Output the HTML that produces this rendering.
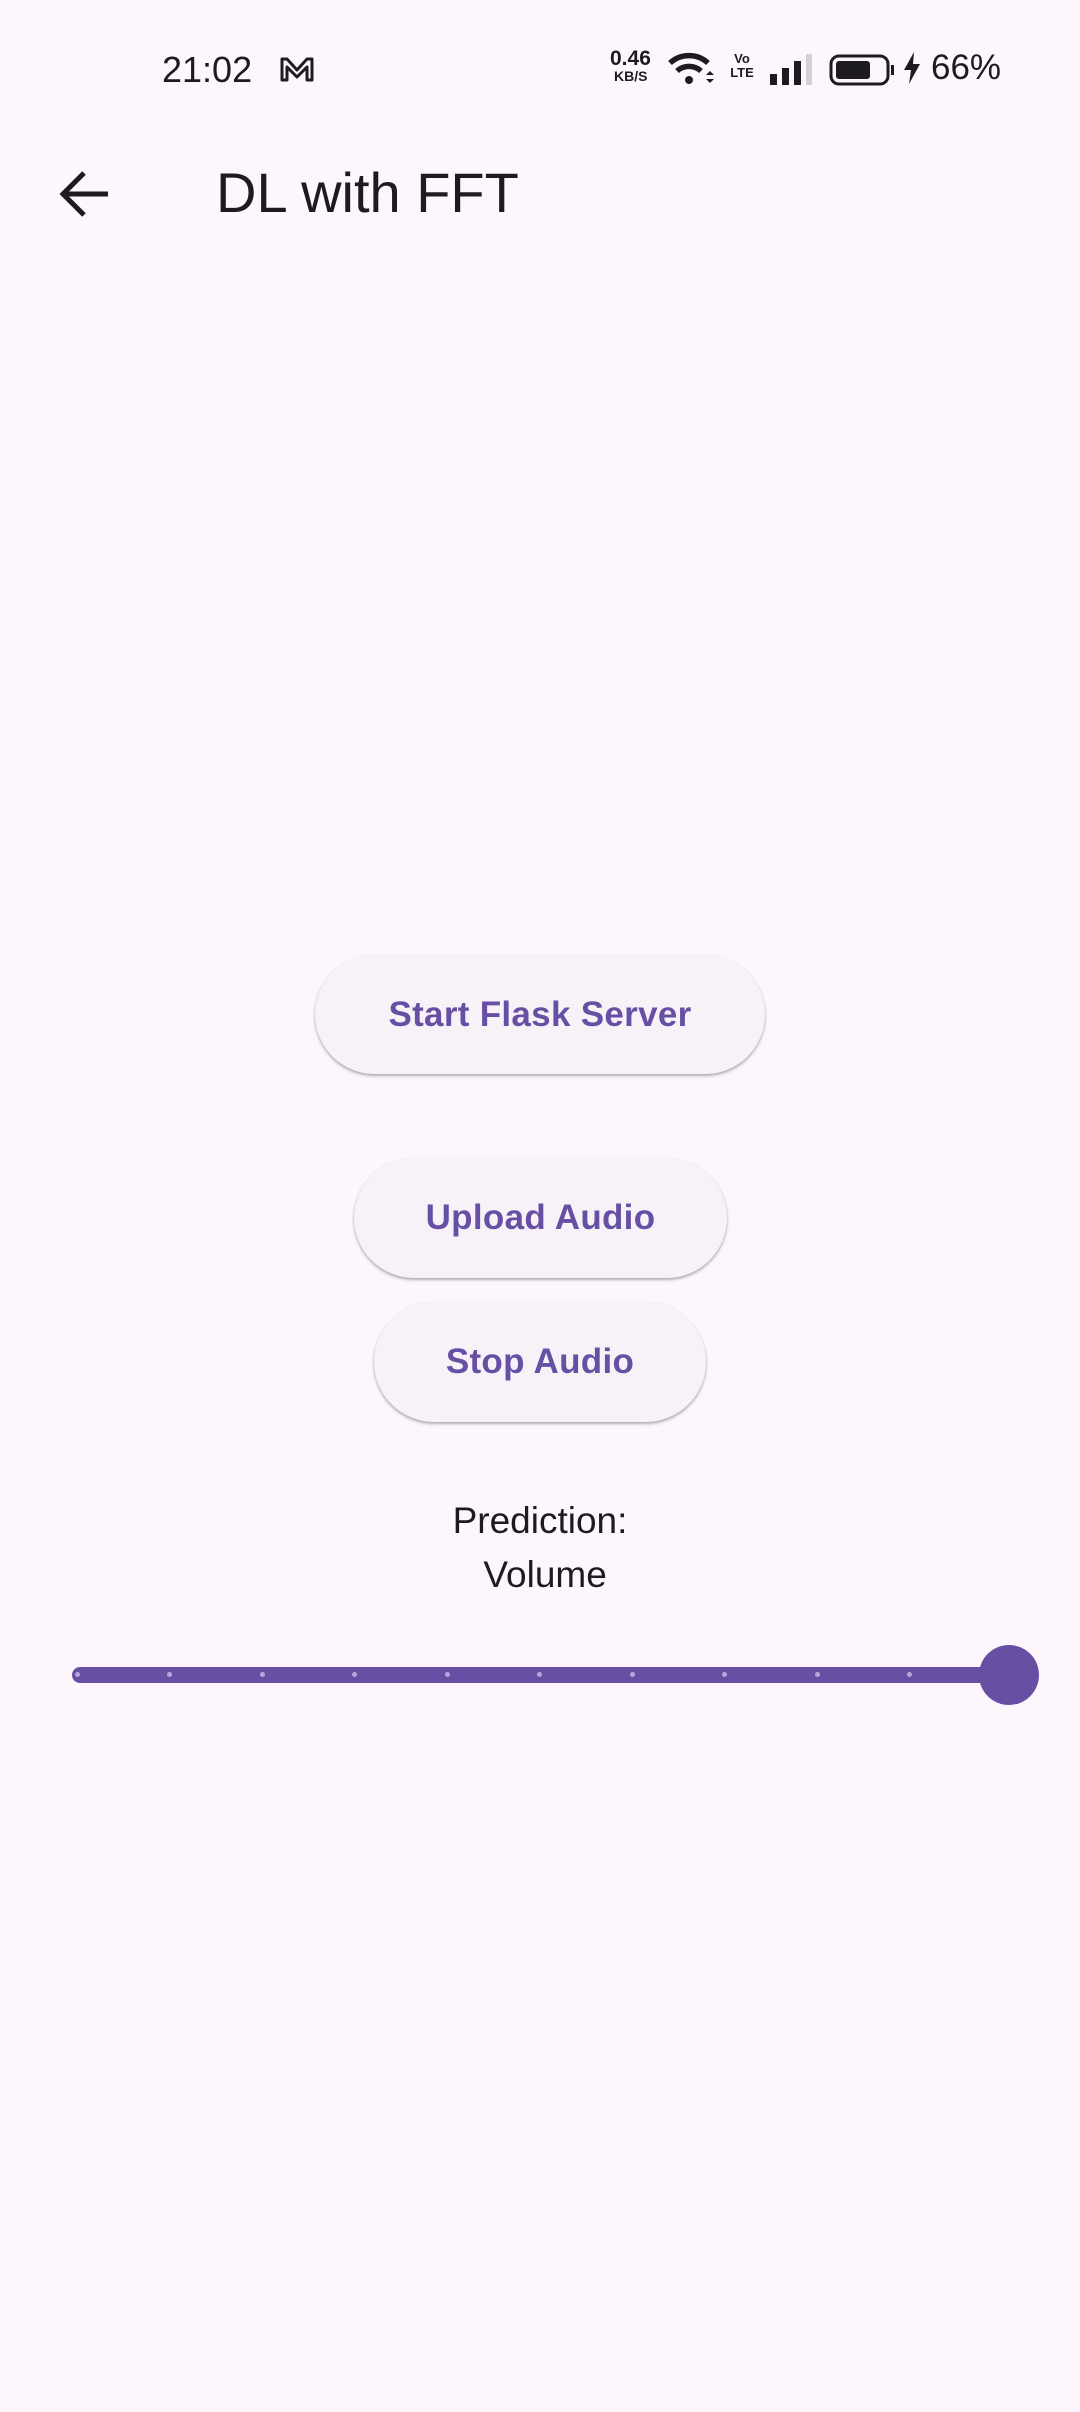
<!DOCTYPE html>
<html><head><meta charset="utf-8"><style>
html,body{margin:0;padding:0}
body{width:1080px;height:2412px;background:#fdf7fd;position:relative;overflow:hidden;font-family:"Liberation Sans",sans-serif;color:#1d1b20}
.abs{position:absolute}
.btn{position:absolute;background:#f6f2f8;border-radius:60px;box-shadow:0 2px 3px rgba(0,0,0,0.25),0 1px 2px rgba(0,0,0,0.12);color:#6750a4;font-weight:bold;font-size:35px;display:flex;align-items:center;justify-content:center;letter-spacing:0.3px}
.dot{position:absolute;top:1672px;width:5px;height:5px;border-radius:50%;background:#b7a6de}
</style></head><body>
<div class="abs" style="left:162px;top:50px;font-size:36px;line-height:40px">21:02</div>
<svg class="abs" style="left:279px;top:56px" width="36" height="26" viewBox="0 0 36 26"><path d="M3 24V3h5l10 11L28 3h5v21h-5V11l-10 10L8 11v13z" fill="none" stroke="#1d1b20" stroke-width="3" stroke-linejoin="round"/></svg>
<div class="abs" style="left:610px;top:49px;font-size:21px;font-weight:bold;line-height:20px">0.46</div>
<div class="abs" style="left:614px;top:68px;font-size:14px;font-weight:bold;line-height:16px">KB/S</div>
<svg class="abs" style="left:668px;top:50px" width="48" height="36" viewBox="0 0 48 36"><path d="M2 13a28 28 0 0 1 38 0" stroke="#1d1b20" stroke-width="5.5" fill="none"/><path d="M9 21a18 18 0 0 1 24 0" stroke="#1d1b20" stroke-width="5.5" fill="none"/><circle cx="21" cy="30" r="4" fill="#1d1b20"/><path d="M38 25l4-4 4 4zM38 29l4 4 4-4z" fill="#1d1b20"/></svg>
<div class="abs" style="left:730px;top:52px;font-size:13px;font-weight:bold;line-height:14px;width:24px;text-align:center">Vo<br>LTE</div>
<svg class="abs" style="left:770px;top:54px" width="44" height="31"><rect x="0" y="20" width="7" height="11" fill="#1d1b20"/><rect x="12" y="14" width="7" height="17" fill="#1d1b20"/><rect x="24" y="7" width="7" height="24" fill="#1d1b20"/><rect x="36" y="0" width="6" height="31" fill="#d4d0d4"/></svg>
<svg class="abs" style="left:829px;top:54px" width="66" height="32"><rect x="2" y="2" width="57" height="28" rx="8" fill="none" stroke="#1d1b20" stroke-width="3"/><rect x="7" y="7" width="34" height="18" rx="3" fill="#1d1b20"/><rect x="62" y="11" width="3" height="10" fill="#1d1b20"/></svg>
<svg class="abs" style="left:902px;top:52px" width="20" height="32"><path d="M12 0L2 18h7l-2 14 11-20h-7z" fill="#1d1b20"/></svg>
<div class="abs" style="left:931px;top:48px;font-size:35px;line-height:40px">66%</div>
<svg class="abs" style="left:56px;top:168px" width="56" height="52" viewBox="0 0 56 52"><path d="M52 26H10M28 5L7 26l21 21" stroke="#1d1b20" stroke-width="5" fill="none"/></svg>
<div class="abs" style="left:216px;top:160px;font-size:56px;line-height:66px">DL with FFT</div>
<div class="btn" style="left:315px;top:955px;width:450px;height:119px">Start Flask Server</div>
<div class="btn" style="left:354px;top:1158px;width:373px;height:120px">Upload Audio</div>
<div class="btn" style="left:374px;top:1302px;width:332px;height:120px">Stop Audio</div>
<div class="abs" style="left:0;width:1080px;top:1494px;text-align:center;font-size:37px;line-height:54px">Prediction:<br>&nbsp;Volume</div>
<div class="abs" style="left:72px;top:1667px;width:940px;height:16px;border-radius:8px;background:#6750a4"></div>
<div class="dot" style="left:75px"></div><div class="dot" style="left:167px"></div><div class="dot" style="left:260px"></div><div class="dot" style="left:352px"></div><div class="dot" style="left:445px"></div><div class="dot" style="left:537px"></div><div class="dot" style="left:630px"></div><div class="dot" style="left:722px"></div><div class="dot" style="left:815px"></div><div class="dot" style="left:907px"></div>
<div class="abs" style="left:979px;top:1645px;width:60px;height:60px;border-radius:50%;background:#6750a4"></div>
</body></html>
